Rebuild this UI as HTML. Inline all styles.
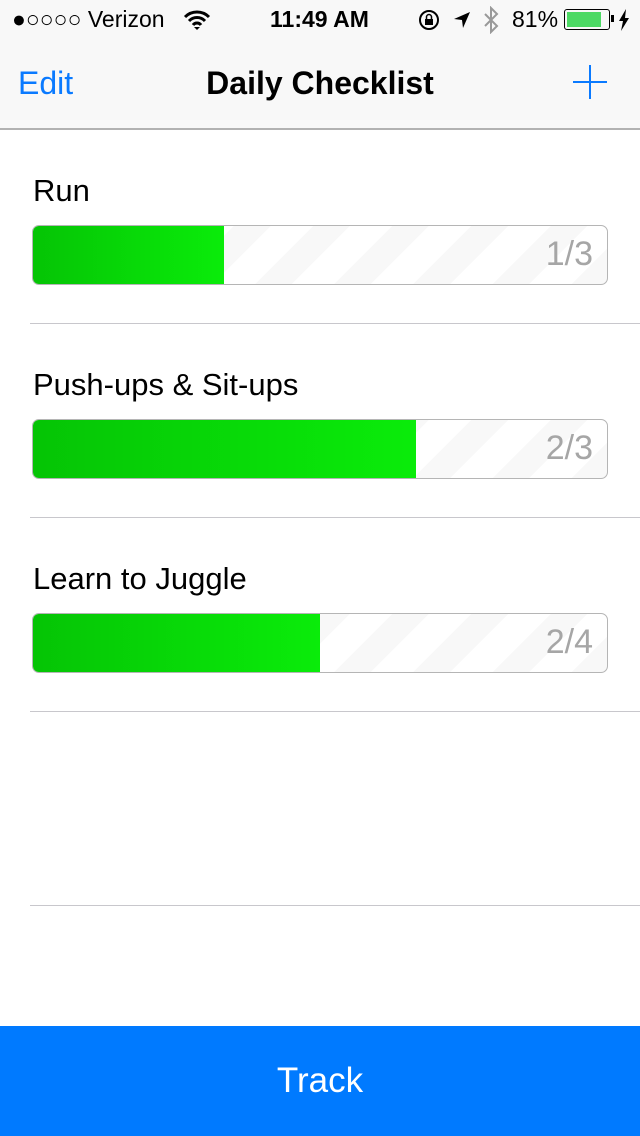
<!DOCTYPE html>
<html><head><meta charset="utf-8"><style>
body{margin:0;width:640px;height:1136px;background:#fff;font-family:"Liberation Sans",sans-serif;position:relative;overflow:hidden}
.hdr{position:absolute;left:0;top:0;width:640px;height:128px;background:#f8f8f8;border-bottom:2px solid #b2b2b2}
.abs{position:absolute;white-space:nowrap}
.sep{position:absolute;left:30px;right:0;height:1px;background:#c8c7cc}
.lbl{position:absolute;left:33px;font-size:31px;color:#000}
.bar{position:absolute;left:32px;width:574px;height:58px;border:1px solid #b5b5b5;border-radius:7px;overflow:hidden;
background:repeating-linear-gradient(135deg,#fff 0 30px,#f8f8f8 30px 56px)}
.fill{position:absolute;left:0;top:0;bottom:0;background:linear-gradient(90deg,#05c405,#0aec0a)}
.num{position:absolute;right:14px;top:9px;font-size:34px;color:#a6a6a6}
</style></head><body>
<div class="hdr">
<div class="abs" style="left:12px;top:6px;font-size:23px">●○○○○ Verizon</div>
<svg class="abs" style="left:183px;top:10px" width="28" height="20" viewBox="0 0 28 20"><path d="M2 7a17 17 0 0 1 24 0M6 11a11 11 0 0 1 16 0M10 15a5 5 0 0 1 8 0" stroke="#000" stroke-width="3" fill="none"/><path d="M11 17l3 3 3-3z" fill="#000"/></svg>
<div class="abs" style="left:270px;top:6px;font-size:23px;font-weight:bold">11:49 AM</div>
<svg class="abs" style="left:417px;top:8px" width="24" height="24" viewBox="0 0 24 24"><circle cx="12" cy="12" r="9" stroke="#000" stroke-width="2" fill="none"/><rect x="8" y="11" width="8" height="6" fill="#000"/><path d="M9.5 11V9a2.5 2.5 0 0 1 5 0v2" stroke="#000" stroke-width="1.5" fill="none"/></svg>
<svg class="abs" style="left:452px;top:10px" width="20" height="20" viewBox="0 0 20 20"><path d="M18 2L2 9l8 1 1 8z" fill="#000"/></svg>
<svg class="abs" style="left:482px;top:6px" width="18" height="28" viewBox="0 0 18 28"><path d="M3 8l12 12-6 6V2l6 6L3 20" stroke="#999" stroke-width="2" fill="none"/></svg>
<div class="abs" style="left:512px;top:6px;font-size:23px">81%</div>
<div class="abs" style="left:564px;top:9px;width:44px;height:19px;border:1.5px solid #000;border-radius:3px"><div style="margin:2px;width:34px;height:15px;background:#4cd964"></div></div>
<div class="abs" style="left:611px;top:15px;width:3px;height:7px;background:#000"></div>
<svg class="abs" style="left:618px;top:9px" width="12" height="22" viewBox="0 0 12 22"><path d="M8 0L1 12h4l-2 10 8-13H7z" fill="#000"/></svg>
<div class="abs" style="left:18px;top:65px;font-size:32px;color:#0a7aff">Edit</div>
<div class="abs" style="left:0;width:640px;text-align:center;top:65px;font-size:32px;font-weight:bold">Daily Checklist</div>
<div class="abs" style="left:589px;top:65px;width:2px;height:34px;background:#0a7aff"></div>
<div class="abs" style="left:573px;top:81px;width:34px;height:2px;background:#0a7aff"></div>
</div>

<div class="lbl" style="top:173px">Run</div>
<div class="bar" style="top:225px"><div class="fill" style="width:191px"></div><div class="num">1/3</div></div>
<div class="sep" style="top:323px"></div>
<div class="lbl" style="top:367px">Push-ups &amp; Sit-ups</div>
<div class="bar" style="top:419px"><div class="fill" style="width:383px"></div><div class="num">2/3</div></div>
<div class="sep" style="top:517px"></div>
<div class="lbl" style="top:561px">Learn to Juggle</div>
<div class="bar" style="top:613px"><div class="fill" style="width:287px"></div><div class="num">2/4</div></div>
<div class="sep" style="top:711px"></div>
<div class="sep" style="top:905px"></div>

<div class="abs" style="left:0;top:1026px;width:640px;height:110px;background:#007aff;color:#fff;font-size:35px;text-align:center;line-height:110px">Track</div>
</body></html>
